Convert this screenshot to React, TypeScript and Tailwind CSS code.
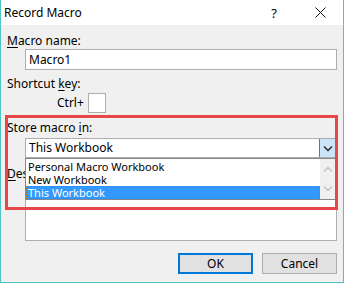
import React from 'react';

function Accel({ children }: { children: React.ReactNode }) {
  return <span className="underline underline-offset-[2px]">{children}</span>;
}

function Chevron({ dir, color }: { dir: 'up' | 'down'; color: string }) {
  const d = dir === 'down' ? 'M1 1.5 L5 5.5 L9 1.5' : 'M1 5.5 L5 1.5 L9 5.5';
  return (
    <svg width="10" height="7" viewBox="0 0 10 7">
      <path d={d} fill="none" stroke={color} strokeWidth="1.4" />
    </svg>
  );
}

export default function App() {
  return (
    <div className="relative w-[344px] h-[283px] overflow-hidden bg-[#f0f0f0] border-x border-b border-[#4fc4c4] font-['Noto_Sans',sans-serif] text-[12px] text-black">
      {/* Title bar */}
      <div className="h-[25px] bg-white flex items-center">
        <span className="flex-1 pl-[3px] leading-[16px]">Record Macro</span>
        <div className="w-[46px] text-center text-[13px] leading-[16px]">?</div>
        <div className="w-[46px] flex justify-center">
          <svg width="11" height="11" viewBox="0 0 11 11">
            <path d="M0.5 0.5 L10.5 10.5 M10.5 0.5 L0.5 10.5" stroke="#111" strokeWidth="1" />
          </svg>
        </div>
      </div>

      {/* Body */}
      <div className="px-[6px]">
        <div className="mt-[8px] leading-[16px]">
          <Accel>M</Accel>acro name:
        </div>
        <div className="ml-[18px] w-[312px] h-[21px] bg-white border border-[#adadad] flex items-center pl-[3px]">
          Macro1
        </div>

        <div className="mt-[6px] leading-[16px]">
          Shortcut <Accel>k</Accel>ey:
        </div>
        <div className="mt-[1px] h-[20px] flex items-center pl-[50px]">
          <span className="leading-[16px]">Ctrl+</span>
          <div className="ml-[4px] w-[18px] h-[20px] bg-white border border-[#adadad]" />
        </div>

        <div className="mt-[7px] leading-[16px]">
          Store macro <Accel>i</Accel>n:
        </div>
        <div className="relative mt-[2px] ml-[18px] w-[312px] h-[20px] bg-white border border-[#adadad] flex">
          <div className="flex-1 flex items-center pl-[3px]">This Workbook</div>
          <div className="w-[17px] h-full bg-[#cce4f7] border-l border-[#3c7fb1] flex items-center justify-center">
            <Chevron dir="down" color="#222" />
          </div>

          {/* Open list */}
          <div className="absolute left-[-1px] top-[19px] w-[311px] h-[42px] bg-white border border-[#828790] flex z-10">
            <div className="flex-1 flex flex-col pt-[1px] text-[11px] leading-[13px]">
              <div className="pl-[2px] h-[13px]">Personal Macro Workbook</div>
              <div className="pl-[2px] h-[13px]">New Workbook</div>
              <div className="pl-[2px] h-[13px] bg-[#3399ff] text-white outline-1 outline-dotted outline-offset-[-1px] outline-[#cc6a00]">
                This Workbook
              </div>
            </div>
            <div className="w-[15px] h-full bg-[#f0f0f0] flex flex-col items-center justify-between py-[7px]">
              <Chevron dir="up" color="#c2c2c2" />
              <Chevron dir="down" color="#c2c2c2" />
            </div>
          </div>
        </div>

        <div className="mt-[8px] leading-[16px] w-[18px] overflow-hidden whitespace-nowrap">
          <Accel>D</Accel>escription:
        </div>
        <div className="mt-[1px] ml-[18px] w-[312px] h-[58px] bg-white border border-[#adadad]" />

        <div className="mt-[12px] flex pl-[171px] gap-[9px]">
          <button className="w-[75px] h-[21px] bg-[#e1e1e1] border-2 border-[#0078d7] leading-[16px]">OK</button>
          <button className="w-[75px] h-[21px] bg-[#e1e1e1] border border-[#adadad] leading-[16px]">Cancel</button>
        </div>
      </div>

      {/* Red highlight annotation */}
      <div className="absolute left-[4px] top-[115px] w-[333px] h-[95px] border-[3px] border-[#e8474a] pointer-events-none z-20" />
    </div>
  );
}
